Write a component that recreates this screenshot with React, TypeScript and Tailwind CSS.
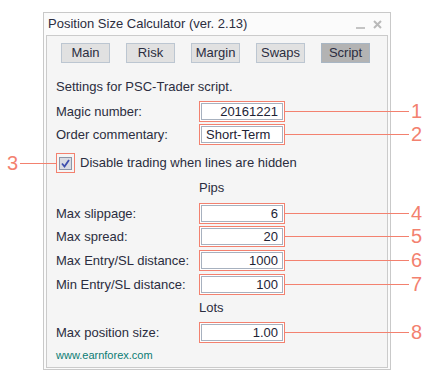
import React from 'react';

const font = { fontFamily: 'Tahoma, "Liberation Sans", "DejaVu Sans", sans-serif' };

const tabs = ['Main', 'Risk', 'Margin', 'Swaps', 'Script'];

function Field({ value, align = 'right' }: { value: string; align?: 'left' | 'right' }) {
  return (
    <div className="h-[21px] w-[86px] border border-[#f3816f] bg-white p-px">
      <div
        className={`flex h-full w-full items-center border border-[#a7b1bf] bg-white px-[4px] text-[13px] text-[#1e2335] ${
          align === 'right' ? 'justify-end' : 'justify-start'
        }`}
      >
        {value}
      </div>
    </div>
  );
}

function Row({ label, value, align, className }: { label: string; value: string; align?: 'left' | 'right'; className?: string }) {
  return (
    <div className={`flex h-[21px] items-center ${className ?? ''}`}>
      <span className="w-[143px] text-[13px] text-[#2b2d40]">{label}</span>
      <Field value={value} align={align} />
    </div>
  );
}

// annotation lines + numbers drawn over the window
const marks = [
  { n: '1', y: 111 },
  { n: '2', y: 134 },
  { n: '4', y: 213 },
  { n: '5', y: 236 },
  { n: '6', y: 260 },
  { n: '7', y: 284 },
  { n: '8', y: 332 },
];

export default function App() {
  return (
    <div className="relative h-[382px] w-[433px] overflow-hidden bg-white" style={font}>
      <div className="ml-[43px] mt-[12px] flex h-[358px] w-[348px] flex-col border border-[#c9c9c9] bg-[#fbfbfb] px-[2px] pb-[1px]">
        {/* title bar */}
        <div className="flex h-[22px] shrink-0 items-center justify-between pl-[2px] pr-[6px]">
          <span className="text-[13px] text-[#2b2d40]">Position Size Calculator (ver. 2.13)</span>
          <div className="flex items-center gap-[8px]">
            <span className="mt-[8px] block h-[2px] w-[9px] bg-[#c4c4c4]" />
            <svg width="9" height="9" viewBox="0 0 9 9">
              <path d="M1 1 L8 8 M8 1 L1 8" stroke="#b9b9b9" strokeWidth="2" />
            </svg>
          </div>
        </div>

        {/* content panel */}
        <div className="flex-1 border border-[#cbcbcb] bg-[#f5f5f5] pl-[9px] pt-[7px]">
          <div className="flex gap-[16px] pl-[5px]">
            {tabs.map((t) => (
              <div
                key={t}
                className={`flex h-[20px] w-[49px] items-center justify-center border text-[13px] text-[#2b2d40] ${
                  t === 'Script' ? 'border-[#a8b6c4] bg-[#b3b3b3]' : 'border-[#bcc6d1] bg-[#e1e1e1]'
                }`}
              >
                {t}
              </div>
            ))}
          </div>

          <div className="mt-[16px] h-[16px] text-[13px] leading-[16px] text-[#2b2d40]">Settings for PSC-Trader script.</div>

          <Row className="mt-[6px]" label="Magic number:" value="20161221" />
          <Row className="mt-[2px]" label="Order commentary:" value="Short-Term" align="left" />

          <div className="mt-[8px] flex h-[20px] items-center gap-[5px]">
            <div className="flex h-[20px] w-[19px] items-center justify-center border border-[#f3816f]">
              <svg width="13" height="13" viewBox="0 0 13 13">
                <rect x="0.5" y="0.5" width="12" height="12" fill="#d9dbe3" stroke="#8d96a8" />
                <path d="M3 6.5 L5.5 9.5 L10 3" fill="none" stroke="#3f4fae" strokeWidth="1.8" />
              </svg>
            </div>
            <span className="text-[13px] text-[#2b2d40]">Disable trading when lines are hidden</span>
          </div>

          <div className="mt-[7px] h-[16px] pl-[143px] text-[13px] leading-[16px] text-[#2b2d40]">Pips</div>

          <Row className="mt-[7px]" label="Max slippage:" value="6" />
          <Row className="mt-[2px]" label="Max spread:" value="20" />
          <Row className="mt-[3px]" label="Max Entry/SL distance:" value="1000" />
          <Row className="mt-[3px]" label="Min Entry/SL distance:" value="100" />

          <div className="mt-[5px] h-[16px] pl-[143px] text-[13px] leading-[16px] text-[#2b2d40]">Lots</div>

          <Row className="mt-[6px]" label="Max position size:" value="1.00" />

          <div className="mt-[5px] h-[14px] text-[11px] leading-[14px] text-[#0b7c74]">www.earnforex.com</div>
        </div>
      </div>

      {/* annotations */}
      {marks.map((m) => (
        <React.Fragment key={m.n}>
          <div className="absolute left-[285px] h-px w-[124px] bg-[#f3816f]" style={{ top: m.y }} />
          <span
            className="absolute left-[411px] text-[20px] leading-[20px] text-[#f3816f]"
            style={{ top: m.y - 10 }}
          >
            {m.n}
          </span>
        </React.Fragment>
      ))}
      <span className="absolute left-[7px] top-[153px] text-[20px] leading-[20px] text-[#f3816f]">3</span>
      <div className="absolute left-[20px] top-[163px] h-px w-[36px] bg-[#f3816f]" />
    </div>
  );
}
